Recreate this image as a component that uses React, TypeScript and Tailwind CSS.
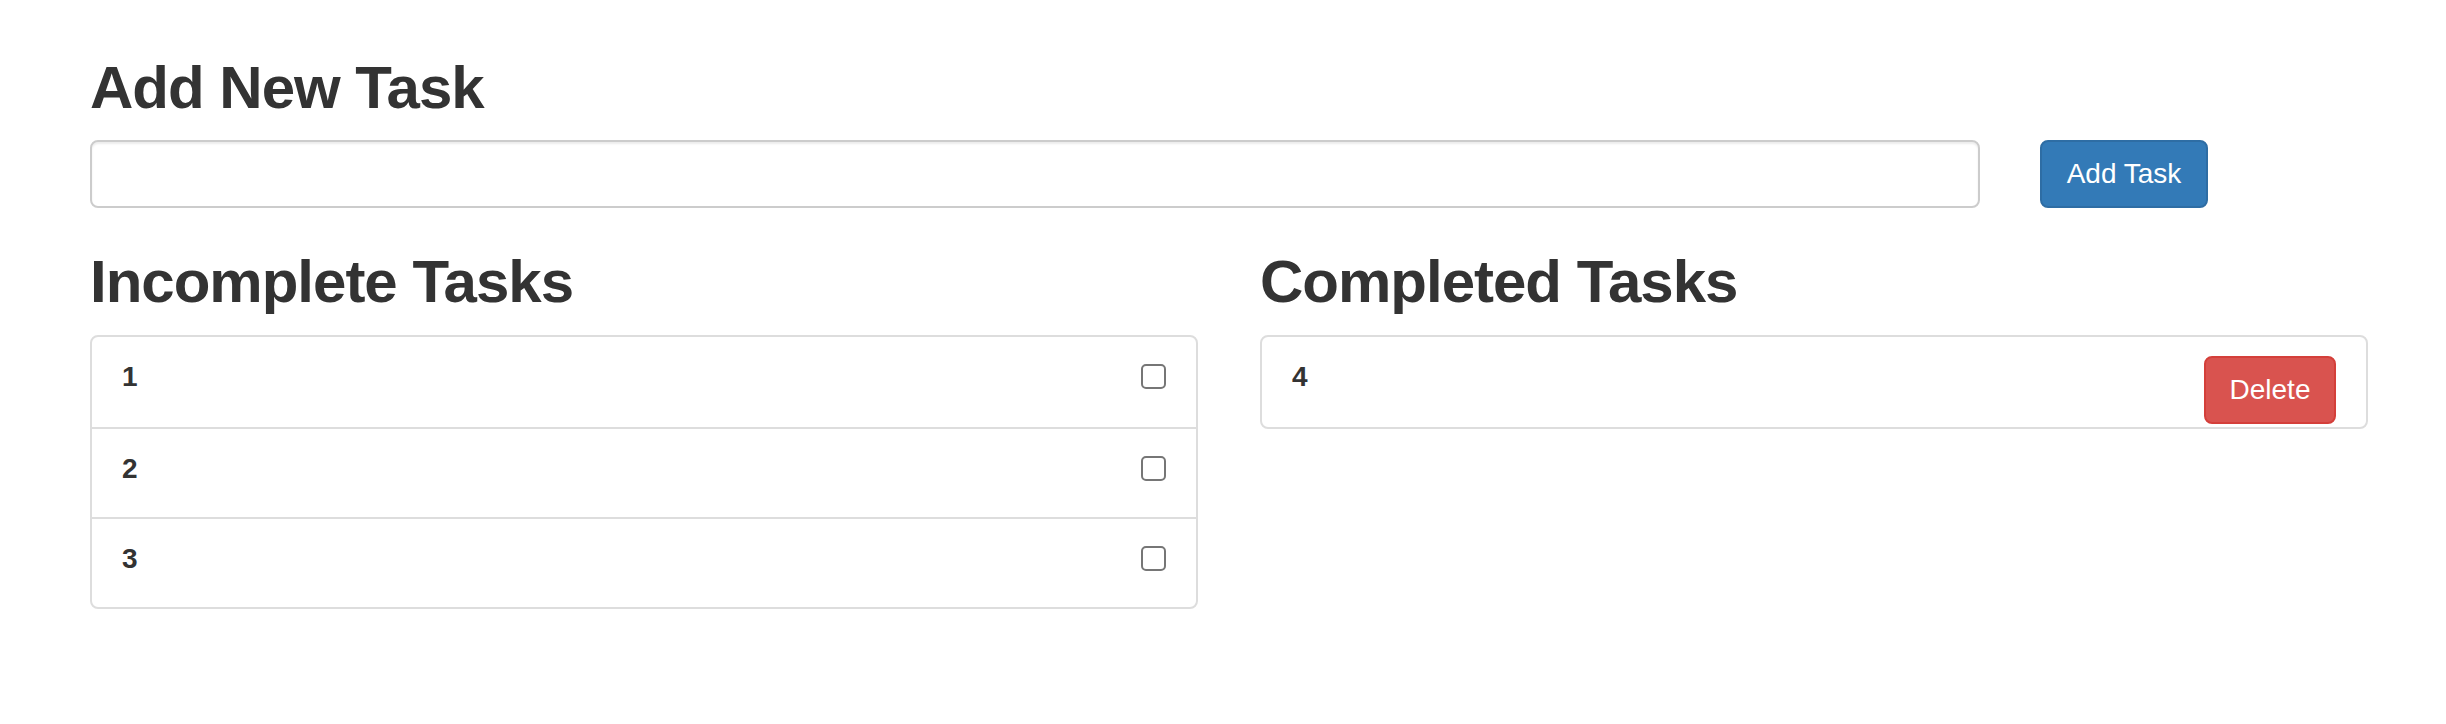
import { useState } from "react";

type Task = { id: number; label: string };

const font = "font-['Helvetica_Neue','Liberation_Sans',Arial,sans-serif]";

const TaskRow = ({ task, done, first }: { task: Task; done: boolean; first: boolean }) => (
  <div
    className={`flex h-[90px] items-start justify-between px-[30px] pt-[20px] ${
      first ? "" : "border-t-2 border-[#dddddd]"
    }`}
  >
    <span className="text-[28px] font-bold leading-[40px] text-[#333333]">{task.label}</span>
    {done ? (
      <button className="-mt-px h-[68px] w-[132px] rounded-[8px] border-2 border-[#d43f3a] bg-[#d9534f] text-[28px] leading-[40px] text-white">
        Delete
      </button>
    ) : (
      <span className="mt-[7px] block h-[25px] w-[25px] rounded-[5px] border-2 border-[#767676] bg-white" />
    )}
  </div>
);

const TaskPanel = ({ title, tasks, done }: { title: string; tasks: Task[]; done: boolean }) => (
  <div className="w-[1108px] shrink-0">
    <h2 className="mb-[20px] text-[60px] font-bold leading-[66px] tracking-[-1px] text-[#333333]">{title}</h2>
    <div className="overflow-hidden rounded-[8px] border-2 border-[#dddddd] bg-white">
      {tasks.map((t, i) => (
        <TaskRow key={t.id} task={t} done={done} first={i === 0} />
      ))}
    </div>
  </div>
);

export default function App() {
  const [value, setValue] = useState("");
  const incomplete: Task[] = [
    { id: 1, label: "1" },
    { id: 2, label: "2" },
    { id: 3, label: "3" },
  ];
  const completed: Task[] = [{ id: 4, label: "4" }];

  return (
    <div className={`min-h-[724px] bg-white pl-[90px] pt-[55px] ${font}`}>
      <h2 className="mb-[19px] text-[60px] font-bold leading-[66px] tracking-[-1px] text-[#333333]">Add New Task</h2>
      <div className="flex items-start gap-[60px]">
        <input
          value={value}
          onChange={(e) => setValue(e.target.value)}
          className="h-[68px] w-[1890px] shrink-0 rounded-[8px] border-2 border-[#cccccc] bg-white px-[24px] text-[28px] shadow-[inset_0_2px_2px_rgba(0,0,0,0.075)] outline-none"
        />
        <button className="h-[68px] w-[168px] shrink-0 rounded-[8px] border-2 border-[#2e6da4] bg-[#337ab7] text-[28px] leading-[40px] text-white">
          Add Task
        </button>
      </div>
      <div className="mt-[41px] flex gap-[62px]">
        <TaskPanel title="Incomplete Tasks" tasks={incomplete} done={false} />
        <TaskPanel title="Completed Tasks" tasks={completed} done={true} />
      </div>
    </div>
  );
}
